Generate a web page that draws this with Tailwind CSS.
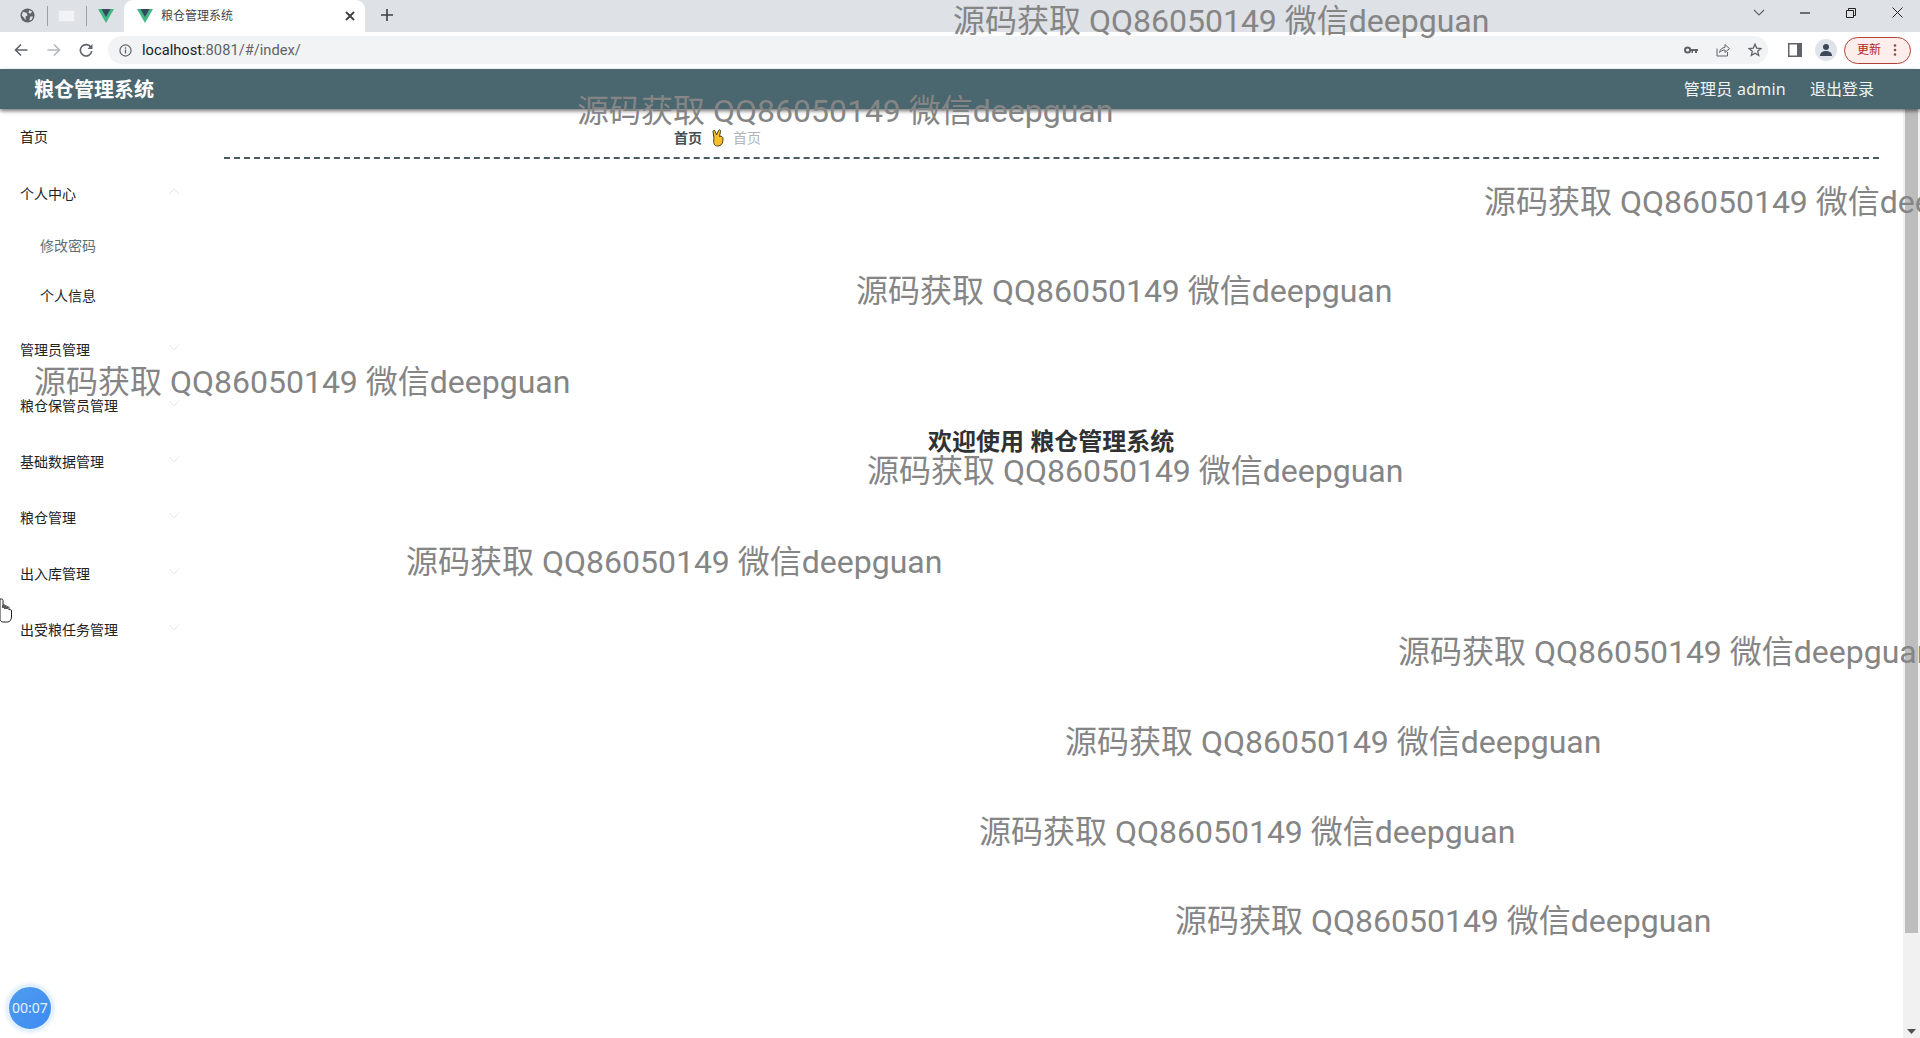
<!DOCTYPE html>
<html lang="zh-CN">
<head>
    <meta charset="UTF-8">
    <meta name="viewport" content="width=device-width, initial-scale=1.0">
    <title>粮仓管理系统</title>
    <script src="https://cdn.jsdelivr.net/npm/@tailwindcss/browser@4"></script>
</head>
<body class="relative h-[1038px] overflow-hidden bg-white font-['Noto_Sans','Noto_Sans_CJK_SC',sans-serif] text-[#222]">
    <!-- Browser tab strip -->
    <div class="flex h-8 items-center bg-[#dee1e6]">
        <div class="flex w-[124px] items-center pl-[20px]">
            <svg class="mt-[-2px] h-[15px] w-[15px]" viewBox="0 0 16 16"><circle cx="8" cy="8" r="7.5" fill="#5f6368"/><path d="M3 4l4 1 1 3-2 1 0 4-2-3-2-2zM10 2l3 2-2 2-2-1zM11 9l3 0-2 4-2 0z" fill="#dee1e6"/></svg>
            <span class="ml-[12px] h-[20px] w-px bg-[#9aa0a6]"></span>
            <span class="ml-[10px] h-[12px] w-[17px] border border-[#e3e5e8] bg-[#f1f3f4]"></span>
            <span class="ml-[11px] h-[20px] w-px bg-[#9aa0a6]"></span>
            <svg class="ml-[11px] h-[14px] w-[16px]" viewBox="0 0 16 14"><path d="M0 0h16L8 14z" fill="#41b883"/><path d="M3.5 0h9L8 8z" fill="#35495e"/></svg>
        </div>
        <div class="flex h-8 w-[241px] items-center rounded-t-[9px] bg-white pl-[13px] pr-[10px]">
            <svg class="h-[14px] w-[16px] shrink-0" viewBox="0 0 16 14"><path d="M0 0h16L8 14z" fill="#41b883"/><path d="M3.5 0h9L8 8z" fill="#35495e"/></svg>
            <span class="ml-[8px] text-[12px] leading-none text-[#45474a]">粮仓管理系统</span>
            <svg class="ml-auto mt-[-1px] h-[10px] w-[10px]" viewBox="0 0 10 10"><path d="M1 1l8 8M9 1l-8 8" stroke="#3c4043" stroke-width="1.8"/></svg>
        </div>
        <svg class="ml-[16px] mt-[-2px] h-[12px] w-[12px]" viewBox="0 0 12 12"><path d="M6 0v12M0 6h12" stroke="#3c4043" stroke-width="1.6"/></svg>
        <div class="ml-auto mb-[7px] flex items-center pr-[17px]">
            <svg class="h-[8px] w-[12px]" viewBox="0 0 12 8"><path d="M1 1l5 5 5-5" fill="none" stroke="#5f6368" stroke-width="1.1"/></svg>
            <svg class="ml-[35px] h-[2px] w-[10px]" viewBox="0 0 10 2"><path d="M0 1h10" stroke="#222" stroke-width="1.2"/></svg>
            <svg class="ml-[36px] h-[10px] w-[10px]" viewBox="0 0 10 10"><path d="M.5 2.5h7v7h-7zM2.5 2.5v-2h7v7h-2" fill="none" stroke="#222"/></svg>
            <svg class="ml-[36px] h-[11px] w-[11px]" viewBox="0 0 11 11"><path d="M.5.5l10 10M10.5.5l-10 10" stroke="#222"/></svg>
        </div>
    </div>

    <!-- Browser toolbar -->
    <div class="flex h-[37px] items-center bg-white pb-[1px]">
        <svg class="ml-[14px] h-[14px] w-[14px]" viewBox="0 0 14 14"><path d="M13.5 7H2M7 1.5L1.5 7 7 12.5" fill="none" stroke="#5f6368" stroke-width="1.6"/></svg>
        <svg class="ml-[19px] h-[14px] w-[14px]" viewBox="0 0 14 14"><path d="M.5 7H12M7 1.5L12.5 7 7 12.5" fill="none" stroke="#b4b7bb" stroke-width="1.6"/></svg>
        <svg class="ml-[18px] h-[14px] w-[14px]" viewBox="0 0 14 14"><path d="M12 4.5A5.7 5.7 0 1 0 12.7 8" fill="none" stroke="#5f6368" stroke-width="1.6"/><path d="M13.5 1v5h-5z" fill="#5f6368"/></svg>
        <div class="ml-[15px] flex h-[28px] w-[1660px] items-center rounded-full bg-[#f1f3f4] pl-[11px] pr-[6px]">
            <svg class="h-[13px] w-[13px] shrink-0" viewBox="0 0 14 14"><circle cx="7" cy="7" r="6" fill="none" stroke="#5f6368" stroke-width="1.3"/><path d="M7 6v4.2M7 3.6v1.4" stroke="#5f6368" stroke-width="1.4"/></svg>
            <span class="ml-[10px] font-['Roboto',sans-serif] text-[14.7px] leading-none text-[#5f6368]"><span class="text-[#202124]">localhost</span>:8081/#/index/</span>
            <div class="ml-auto flex items-center gap-[18px]">
                <svg class="h-[8px] w-[14px]" viewBox="0 0 14 8"><circle cx="3.6" cy="4" r="2.6" fill="none" stroke="#5f6368" stroke-width="2"/><path d="M6 3h8v2h-1v2h-2V5H9v2H7.5V5H6z" fill="#5f6368"/></svg>
                <svg class="h-[14px] w-[14px]" viewBox="0 0 14 14"><path d="M1 5.5V13h10.500V9M3.500 9.500C4 6 6.500 4.500 9 4.500V1.500l4.500 4.200L9 9.500V7C6.500 7 5 8 3.500 9.500z" fill="none" stroke="#5f6368" stroke-width="1"/></svg>
                <svg class="h-[14px] w-[14px]" viewBox="0 0 14 14"><path d="M7 1.200l1.700 3.900 4.200.4-3.200 2.800 1 4.100L7 10.200l-3.700 2.200 1-4.100L1.100 5.500l4.200-.4z" fill="none" stroke="#5f6368" stroke-width="1.300"/></svg>
            </div>
        </div>
        <svg class="ml-[20px] h-[14px] w-[14px]" viewBox="0 0 14 14"><path d="M0 0h14v14H0z" fill="#5f6368"/><path d="M1.500 1.500h7.500v11H1.500z" fill="#fff"/></svg>
        <div class="ml-[13px] flex h-[22px] w-[22px] items-center justify-center rounded-full bg-[#dfe3ea]">
            <svg class="h-[14px] w-[14px]" viewBox="0 0 14 14"><circle cx="7" cy="4" r="3" fill="#3c4858"/><path d="M1 13c0-3.500 2.500-5 6-5s6 1.500 6 5z" fill="#3c4858"/></svg>
        </div>
        <div class="ml-[7px] flex h-[27px] w-[67px] items-center rounded-full border border-[#b3413a] bg-[#fdeeec] pl-[12px] text-[12px] leading-none text-[#b3261e]">
            更新
            <svg class="ml-[12px] h-[12px] w-[4px]" viewBox="0 0 4 12"><circle cx="2" cy="1.500" r="1.300" fill="#8c4a46"/><circle cx="2" cy="6" r="1.300" fill="#8c4a46"/><circle cx="2" cy="10.500" r="1.300" fill="#8c4a46"/></svg>
        </div>
    </div>

    <!-- App header -->
    <header class="relative z-10 flex h-[40px] items-center bg-[#4a666f] pl-[34px] pr-[46px] shadow-[0_2px_4px_rgba(0,0,0,0.55)]">
        <h1 class="mt-[2px] text-[20px] leading-none font-bold text-white">粮仓管理系统</h1>
        <span class="ml-auto tracking-[0.25px] text-[16px] leading-none text-[#eef4f5]">管理员 admin</span>
        <span class="ml-[24px] text-[16px] leading-none text-[#eef4f5]">退出登录</span>
    </header>

    <div class="flex h-[929px]">
        <!-- Sidebar -->
        <aside class="w-[210px] shrink-0 pt-[5px] text-[14px] text-[#222]">
            <div class="flex h-[45px] items-center pl-[20px]">首页</div>
            <div class="mt-[12px] flex h-[45px] items-center justify-between pl-[20px] pr-[30px]">个人中心
                <svg class="mt-[-4px] h-[7px] w-[12px]" viewBox="0 0 12 7"><path d="M1 6l5-5 5 5" fill="none" stroke="#e4e7ed"/></svg>
            </div>
            <div class="mt-[7px] flex h-[45px] items-center pl-[40px] text-[#5b7078]">修改密码</div>
            <div class="mt-[5px] flex h-[45px] items-center pl-[40px]">个人信息</div>
            <div class="mt-[9px] flex h-[45px] items-center justify-between pl-[20px] pr-[30px]">管理员管理
                <svg class="mt-[-4px] h-[7px] w-[12px]" viewBox="0 0 12 7"><path d="M1 1l5 5 5-5" fill="none" stroke="#e4e7ed"/></svg>
            </div>
            <div class="mt-[11px] flex h-[45px] items-center justify-between pl-[20px] pr-[30px]">粮仓保管员管理
                <svg class="mt-[-4px] h-[7px] w-[12px]" viewBox="0 0 12 7"><path d="M1 1l5 5 5-5" fill="none" stroke="#e4e7ed"/></svg>
            </div>
            <div class="mt-[11px] flex h-[45px] items-center justify-between pl-[20px] pr-[30px]">基础数据管理
                <svg class="mt-[-4px] h-[7px] w-[12px]" viewBox="0 0 12 7"><path d="M1 1l5 5 5-5" fill="none" stroke="#e4e7ed"/></svg>
            </div>
            <div class="mt-[11px] flex h-[45px] items-center justify-between pl-[20px] pr-[30px]">粮仓管理
                <svg class="mt-[-4px] h-[7px] w-[12px]" viewBox="0 0 12 7"><path d="M1 1l5 5 5-5" fill="none" stroke="#e4e7ed"/></svg>
            </div>
            <div class="mt-[11px] flex h-[45px] items-center justify-between pl-[20px] pr-[30px]">出入库管理
                <svg class="mt-[-4px] h-[7px] w-[12px]" viewBox="0 0 12 7"><path d="M1 1l5 5 5-5" fill="none" stroke="#e4e7ed"/></svg>
            </div>
            <div class="mt-[11px] flex h-[45px] items-center justify-between pl-[20px] pr-[30px]">出受粮任务管理
                <svg class="mt-[-4px] h-[7px] w-[12px]" viewBox="0 0 12 7"><path d="M1 1l5 5 5-5" fill="none" stroke="#e4e7ed"/></svg>
            </div>
        </aside>

        <!-- Main content -->
        <main class="min-w-0 flex-1 pl-[14px] pr-[24px]">
            <div class="flex h-[50px] items-center border-b-2 border-dashed border-[#4a5a60] pl-[450px] pt-[10px] text-[14px] leading-none">
                <span class="font-bold text-[#3f5057]">首页</span>
                <svg class="ml-[9px] h-[18px] w-[14px]" viewBox="0 0 14 18"><path d="M3 9L2 2.500c0-1.500 2-1.500 2.300 0L5.500 6 7.500 1.500c.6-1.300 2.400-.6 2 .8L8.500 7.500c2-.8 3.500.2 3.500 2.500 0 4-1.500 7-5.500 7C3 17 2 13.500 3 9z" fill="#f5c02c" stroke="#4a3a10" stroke-width="1"/></svg>
                <span class="ml-[8px] text-[#b0b4b8]">首页</span>
            </div>
            <div class="pt-[264px] pl-[704px] text-[24px] leading-[36px] font-bold whitespace-nowrap text-[#303133]">欢迎使用 粮仓管理系统</div>
        </main>

        <!-- Page scrollbar -->
        <div class="relative w-[17px] shrink-0 bg-[#f1f1f1]">
            <div class="mx-auto h-[824px] w-[13px] bg-[#bdbdbd]"></div>
            <svg class="absolute bottom-[4px] left-[4px] h-[5px] w-[9px]" viewBox="0 0 9 5"><path d="M0 0h9L4.500 5z" fill="#505050"/></svg>
        </div>
    </div>

    <!-- Watermarks over the page -->
    <div class="pointer-events-none absolute inset-0 z-20 overflow-hidden font-['Roboto','Noto_Sans_CJK_SC',sans-serif] text-[32px] leading-[40px] whitespace-nowrap text-[#858585]">
        <span class="absolute top-[1px] left-[953px]">源码获取 QQ86050149 微信deepguan</span>
        <span class="absolute top-[91px] left-[577px]">源码获取 QQ86050149 微信deepguan</span>
        <span class="absolute top-[182px] left-[1484px]">源码获取 QQ86050149 微信deepguan</span>
        <span class="absolute top-[271px] left-[856px]">源码获取 QQ86050149 微信deepguan</span>
        <span class="absolute top-[362px] left-[34px]">源码获取 QQ86050149 微信deepguan</span>
        <span class="absolute top-[451px] left-[867px]">源码获取 QQ86050149 微信deepguan</span>
        <span class="absolute top-[542px] left-[406px]">源码获取 QQ86050149 微信deepguan</span>
        <span class="absolute top-[632px] left-[1398px]">源码获取 QQ86050149 微信deepguan</span>
        <span class="absolute top-[722px] left-[1065px]">源码获取 QQ86050149 微信deepguan</span>
        <span class="absolute top-[812px] left-[979px]">源码获取 QQ86050149 微信deepguan</span>
        <span class="absolute top-[901px] left-[1175px]">源码获取 QQ86050149 微信deepguan</span>
    </div>

    <!-- Mouse cursor -->
    <svg class="absolute top-[598px] left-0 z-30 h-[25px] w-[13px]" viewBox="0 0 13 25"><path d="M0 1h1.500c1 0 1.500.6 1.500 1.500V10V7.500c0-1 2-1 2 0V11V8.500c0-1 2-1 2 0V11V9.500c0-1 2-1 2 0V12c1-.8 2.500-.5 2.500 1V19c0 2.500-1.500 5-4 5H3c-1.500 0-2.200-.8-3-2z" fill="#fff" stroke="#222" stroke-width="1"/></svg>

    <!-- Recording timer -->
    <div class="absolute top-[984px] left-[6px] z-30 flex h-[48px] w-[48px] items-center justify-center rounded-full border-[3px] border-[#e3f0fd] bg-gradient-to-br from-[#4f9cee] to-[#3d8bf2] text-[14px] leading-none text-[#e4f1ff] shadow-[0_0_4px_#d5e8fb]">00:07</div>
</body>
</html>
